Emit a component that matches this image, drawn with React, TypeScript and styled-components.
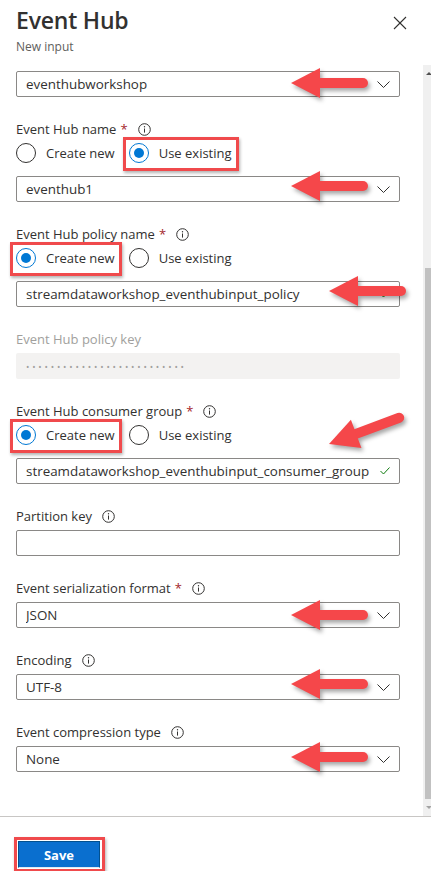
import React from "react";
import styled, { createGlobalStyle } from "styled-components";

const GlobalStyle = createGlobalStyle`
  html, body { margin: 0; padding: 0; background: #ffffff; }
  body { font-family: "Open Sans", "Noto Sans", "Liberation Sans", sans-serif; color: #323130; }
  * { box-sizing: border-box; }
`;

const Panel = styled.div`
  width: 431px;
  height: 871px;
  display: flex;
  flex-direction: column;
  overflow: hidden;
  background: #fff;
`;

const Header = styled.header`
  height: 65px;
  padding: 4px 16px 0 16px;
  display: flex;
  flex-direction: column;
`;

const TitleRow = styled.div`
  display: flex;
  justify-content: space-between;
  align-items: flex-start;
`;

const Title = styled.h1`
  margin: 0;
  font-size: 23px;
  line-height: 32px;
  font-weight: 600;
  color: #323130;
  letter-spacing: -0.2px;
`;

const CloseButton = styled.button`
  border: none;
  background: transparent;
  padding: 0;
  margin: 12px 8px 0 0;
  width: 14px;
  height: 14px;
  display: flex;
  cursor: pointer;
`;

const Subtitle = styled.div`
  font-size: 12px;
  line-height: 18px;
  margin-top: 2px;
  color: #605e5c;
`;

const Body = styled.div`
  flex: 1;
  display: flex;
  min-height: 0;
  overflow: hidden;
`;

const Content = styled.div`
  flex: 1;
  padding: 6px 23px 0 16px;
  display: flex;
  flex-direction: column;
  gap: 22px;
`;

const Field = styled.div`
  position: relative;
  display: flex;
  flex-direction: column;
`;

const Label = styled.div<{ $disabled?: boolean }>`
  display: flex;
  align-items: center;
  height: 20px;
  font-size: 13px;
  color: ${(p) => (p.$disabled ? "#a19f9d" : "#323130")};
  margin-bottom: 4px;
`;

const Required = styled.span`
  color: #a4262c;
  margin-left: 4px;
  font-size: 13px;
`;

const InfoWrap = styled.span`
  display: inline-flex;
  margin-left: 10px;
`;

const RadioRow = styled.div`
  display: flex;
  gap: 14px;
  height: 20px;
  align-items: center;
  margin-bottom: 13px;
`;

const RadioOption = styled.label<{ $highlight?: boolean }>`
  position: relative;
  display: flex;
  align-items: center;
  gap: 10px;
  font-size: 13px;
  color: #323130;
  cursor: pointer;
  &::after {
    content: "";
    display: ${(p) => (p.$highlight ? "block" : "none")};
    position: absolute;
    top: -6px;
    bottom: -8px;
    left: -6px;
    right: -7px;
    border: 3px solid #f04a4c;
    box-shadow: 1px 2px 3px rgba(0, 0, 0, 0.3);
    pointer-events: none;
  }
`;

const RadioCircle = styled.span<{ $checked?: boolean }>`
  width: 20px;
  height: 20px;
  border-radius: 50%;
  border: 1px solid ${(p) => (p.$checked ? "#0078d4" : "#323130")};
  display: flex;
  align-items: center;
  justify-content: center;
  &::before {
    content: "";
    width: 10px;
    height: 10px;
    border-radius: 50%;
    background: #0078d4;
    display: ${(p) => (p.$checked ? "block" : "none")};
  }
`;

const Control = styled.div<{ $disabled?: boolean }>`
  position: relative;
  height: 26px;
  border: ${(p) => (p.$disabled ? "none" : "1px solid #8a8886")};
  background: ${(p) => (p.$disabled ? "#f3f2f1" : "#fff")};
  border-radius: 2px;
  display: flex;
  align-items: center;
  padding: 0 9px 0 ${(p) => (p.$disabled ? "10px" : "9px")};
  font-size: 13.4px;
  color: #323130;
`;

const ControlText = styled.span`
  flex: 1;
  white-space: nowrap;
  overflow: hidden;
`;

const Dots = styled.span`
  flex: 1;
  font-size: 9px;
  letter-spacing: 2.8px;
  color: #a19f9d;
  white-space: nowrap;
`;

const Scrollbar = styled.div`
  width: 8px;
  background: #f0f0f0;
  display: flex;
  flex-direction: column;
`;

const ScrollButton = styled.div<{ $down?: boolean }>`
  height: 17px;
  display: flex;
  justify-content: center;
  align-items: center;
  padding-left: 3px;
  &::before {
    content: "";
    width: 0;
    height: 0;
    border-left: 3px solid transparent;
    border-right: 3px solid transparent;
    ${(p) =>
      p.$down
        ? "border-top: 3px solid #a3a3a3;"
        : "border-bottom: 3px solid #505050;"}
  }
`;

const Track = styled.div`
  flex: 1;
  display: flex;
  flex-direction: column;
  padding: 186px 0 0 2px;
`;

const Thumb = styled.div`
  flex: 1;
  background: #c1c1c1;
`;

const Footer = styled.footer`
  height: 55px;
  border-top: 1px solid #c8c6c4;
  padding: 20px 0 0 14px;
`;

const SaveHighlight = styled.div`
  display: inline-flex;
  border: 3px solid #f04a4c;
  padding: 1px 2px 1px 1px;
  box-shadow: 1px 2px 3px rgba(0, 0, 0, 0.3);
`;

const SaveButton = styled.button`
  width: 82px;
  height: 27px;
  background: #0a6fcf;
  border: 1px solid #02508f;
  border-bottom: 1px solid #dfe9f3;
  color: #fff;
  font-family: "Open Sans", "Noto Sans", sans-serif;
  font-weight: 700;
  font-size: 13px;
  cursor: pointer;
  padding: 0;
`;

const ArrowSvg = styled.svg`
  position: absolute;
  overflow: visible;
  pointer-events: none;
  filter: drop-shadow(2px 3px 2px rgba(0, 0, 0, 0.35));
`;

/* ---------- icons ---------- */

const Chevron = () => (
  <svg width="13" height="7" viewBox="0 0 13 7">
    <polyline points="0.5,0.5 6.5,6.5 12.5,0.5" fill="none" stroke="#323130" strokeWidth="1" />
  </svg>
);

const Check = () => (
  <svg width="10" height="8" viewBox="0 0 10 8">
    <polyline points="0.5,4 3.5,7 9.5,0.5" fill="none" stroke="#107c10" strokeWidth="1" />
  </svg>
);

const InfoIcon = () => (
  <svg width="13" height="13" viewBox="0 0 13 13">
    <circle cx="6.5" cy="6.5" r="5.8" fill="none" stroke="#323130" strokeWidth="1" />
    <line x1="6.5" y1="5.5" x2="6.5" y2="9.6" stroke="#323130" strokeWidth="1" />
    <circle cx="6.5" cy="3.8" r="0.7" fill="#323130" />
  </svg>
);

const CloseIcon = () => (
  <svg width="14" height="14" viewBox="0 0 14 14">
    <line x1="1" y1="1" x2="13" y2="13" stroke="#323130" strokeWidth="1.1" />
    <line x1="13" y1="1" x2="1" y2="13" stroke="#323130" strokeWidth="1.1" />
  </svg>
);

/* Red annotation arrow: tip at (x, y) relative to the parent, pointing left,
   rotated by `angle` degrees (negative lifts the tail). */
const Arrow = ({ x, y, angle = 0, len = 77 }: { x: number; y: number; angle?: number; len?: number }) => (
  <ArrowSvg
    width="100"
    height="80"
    viewBox="0 0 100 80"
    style={{ left: x - 6, top: y - 40 }}
  >
    <g transform={`translate(6 40) rotate(${angle})`}>
      <line x1="26" y1="0" x2={len - 5} y2="0" stroke="#f5474a" strokeWidth="10" strokeLinecap="round" />
      <polygon points="0,0 29,-15 29,15" fill="#f5474a" />
    </g>
  </ArrowSvg>
);

/* ---------- building blocks ---------- */

const FieldLabel = ({
  text,
  required,
  info = true,
  disabled,
}: {
  text: string;
  required?: boolean;
  info?: boolean;
  disabled?: boolean;
}) => (
  <Label $disabled={disabled}>
    {text}
    {required && <Required>*</Required>}
    {info && (
      <InfoWrap>
        <InfoIcon />
      </InfoWrap>
    )}
  </Label>
);

const Radios = ({ checked, highlight }: { checked: "new" | "existing"; highlight: "new" | "existing" }) => (
  <RadioRow>
    <RadioOption $highlight={highlight === "new"}>
      <RadioCircle $checked={checked === "new"} />
      Create new
    </RadioOption>
    <RadioOption $highlight={highlight === "existing"}>
      <RadioCircle $checked={checked === "existing"} />
      Use existing
    </RadioOption>
  </RadioRow>
);

const Dropdown = ({ value, arrowY = 12 }: { value: string; arrowY?: number }) => (
  <Control>
    <ControlText>{value}</ControlText>
    <Chevron />
    <Arrow x={274} y={arrowY} />
  </Control>
);

export default function App() {
  return (
    <>
      <GlobalStyle />
      <Panel>
        <Header>
          <TitleRow>
            <Title>Event Hub</Title>
            <CloseButton aria-label="Close">
              <CloseIcon />
            </CloseButton>
          </TitleRow>
          <Subtitle>New input</Subtitle>
        </Header>

        <Body>
          <Content>
            <Field>
              <Dropdown value="eventhubworkshop" arrowY={11} />
            </Field>

            <Field>
              <FieldLabel text="Event Hub name" required />
              <Radios checked="existing" highlight="existing" />
              <Dropdown value="eventhub1" arrowY={9} />
            </Field>

            <Field>
              <FieldLabel text="Event Hub policy name" required />
              <Radios checked="new" highlight="new" />
              <Control>
                <ControlText>streamdataworkshop_eventhubinput_policy</ControlText>
                <Check />
                <Arrow x={312} y={9} />
              </Control>
            </Field>

            <Field>
              <FieldLabel text="Event Hub policy key" info={false} disabled />
              <Control $disabled>
                <Dots>••••••••••••••••••••••••••</Dots>
              </Control>
            </Field>

            <Field>
              <FieldLabel text="Event Hub consumer group" required />
              <Radios checked="new" highlight="new" />
              <Control>
                <ControlText>streamdataworkshop_eventhubinput_consumer_group</ControlText>
                <Check />
              </Control>
              <Arrow x={313} y={43} angle={-20.5} len={80} />
            </Field>

            <Field>
              <FieldLabel text="Partition key" />
              <Control>
                <ControlText />
              </Control>
            </Field>

            <Field>
              <FieldLabel text="Event serialization format" required />
              <Dropdown value="JSON" arrowY={12} />
            </Field>

            <Field>
              <FieldLabel text="Encoding" />
              <Dropdown value="UTF-8" arrowY={9} />
            </Field>

            <Field>
              <FieldLabel text="Event compression type" />
              <Dropdown value="None" arrowY={10} />
            </Field>
          </Content>

          <Scrollbar>
            <ScrollButton />
            <Track>
              <Thumb />
            </Track>
            <ScrollButton $down />
          </Scrollbar>
        </Body>

        <Footer>
          <SaveHighlight>
            <SaveButton>Save</SaveButton>
          </SaveHighlight>
        </Footer>
      </Panel>
    </>
  );
}
